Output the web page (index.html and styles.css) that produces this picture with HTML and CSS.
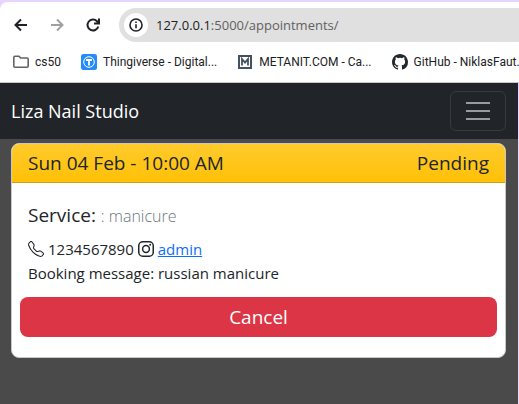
FILE: index.html
```html
<!DOCTYPE html>
<html lang="en">
<head>
<meta charset="utf-8">
<meta name="viewport" content="width=device-width, initial-scale=1">
<title>Liza Nail Studio</title>
<link rel="stylesheet" href="styles.css">
</head>
<body>
<div class="window">
  <header class="browser">
    <div class="toolbar">
      <button class="tool" aria-label="Back"><svg viewBox="0 0 16 16" fill="none" stroke="#202124" stroke-width="2"><path d="M14 8H3M8 2.500 2.500 8 8 13.500"/></svg></button>
      <button class="tool" aria-label="Forward"><svg viewBox="0 0 16 16" fill="none" stroke="#a0a0a0" stroke-width="2"><path d="M2 8h11M8 2.500 13.500 8 8 13.500"/></svg></button>
      <button class="tool" aria-label="Reload"><svg viewBox="0 0 16 16" fill="none" stroke="#202124" stroke-width="2"><path d="M13.300 9.500A5.500 5.500 0 1 1 12 4.200L13.500 6M14 1.500v5H9"/></svg></button>
      <div class="address">
        <button class="site-info" aria-label="Site information"><svg viewBox="0 0 16 16" fill="none" stroke="#202124" stroke-width="1.600"><circle cx="8" cy="8" r="6"/><path d="M8 7.200v4M8 4.500v1.600"/></svg></button>
        <span class="url"><span class="host">127.0.0.1</span>:5000/appointments/</span>
      </div>
    </div>
    <nav class="bookmarks" aria-label="Bookmarks">
      <a class="bookmark" href="#"><svg viewBox="0 0 16 16" fill="none" stroke="#606368" stroke-width="1.600"><path d="M.8 3.500q0-1.200 1.200-1.200h4L7.800 4H14q1.200 0 1.200 1.200V12q0 1.200-1.200 1.200H2Q.8 13.200.8 12Z"/></svg><span>cs50</span></a>
      <a class="bookmark" href="#"><svg viewBox="0 0 16 16"><rect width="16" height="16" rx="2.500" fill="#248bfb"/><circle cx="8" cy="8" r="5.300" fill="none" stroke="#fff"/><path d="M5 6h6M8 6v5.500" stroke="#fff" stroke-width="1.800"/></svg><span>Thingiverse - Digital...</span></a>
      <a class="bookmark" href="#"><svg viewBox="0 0 16 16"><path d="M2 2h12v12H2Z" fill="#fff" stroke="#465160" stroke-width="2"/><path d="M5 11.500V5l3 3.600L11 5v6.500" fill="none" stroke="#465160" stroke-width="1.800"/></svg><span>METANIT.COM - Ca...</span></a>
      <a class="bookmark" href="#"><svg viewBox="0 0 16 16" fill="#24292f"><path d="M8 0C3.580 0 0 3.580 0 8c0 3.540 2.290 6.530 5.470 7.590.4.070.55-.17.55-.38 0-.19-.01-.82-.01-1.490-2.010.37-2.530-.49-2.690-.94-.09-.23-.48-.94-.82-1.130-.28-.15-.68-.52-.01-.53.63-.01 1.080.58 1.230.82.72 1.210 1.870.87 2.330.66.070-.52.28-.87.51-1.070-1.780-.2-3.640-.89-3.640-3.950 0-.87.31-1.590.82-2.150-.08-.2-.36-1.020.08-2.120 0 0 .67-.21 2.200.82a7.600 7.600 0 0 1 4 0c1.530-1.040 2.200-.82 2.200-.82.44 1.100.16 1.920.08 2.120.51.56.82 1.270.82 2.150 0 3.070-1.870 3.750-3.650 3.950.29.25.54.73.54 1.480 0 1.070-.01 1.930-.01 2.200 0 .21.15.46.55.38A8 8 0 0 0 16 8c0-4.420-3.580-8-8-8"/></svg><span>GitHub - NiklasFaut.</span></a>
    </nav>
  </header>
  <div class="page">
    <nav class="navbar">
      <a class="brand" href="#">Liza Nail Studio</a>
      <button class="toggler" aria-label="Toggle navigation"><svg viewBox="0 0 32 32"><path d="M4 8h24M4 16h24M4 24h24" fill="none" stroke="#9a9b9c" stroke-width="2"/></svg></button>
    </nav>
    <main>
      <article class="card">
        <div class="card-header"><span>Sun 04 Feb - 10:00 AM</span><span>Pending</span></div>
        <div class="card-body">
          <h1 class="service">Service: <small>: manicure</small></h1>
          <p class="contact">
            <svg viewBox="0 0 16 16" fill="currentColor"><path d="M3.654 1.328a.678.678 0 0 0-1.015-.063L1.605 2.300c-.483.484-.661 1.169-.45 1.770a17.600 17.600 0 0 0 4.168 6.608 17.600 17.600 0 0 0 6.608 4.168c.601.211 1.286.033 1.770-.45l1.034-1.034a.678.678 0 0 0-.063-1.015l-2.307-1.794a.68.68 0 0 0-.58-.122l-2.190.547a1.750 1.750 0 0 1-1.657-.459L5.482 8.062a1.750 1.750 0 0 1-.46-1.657l.548-2.190a.68.68 0 0 0-.122-.58zM1.884.511a1.745 1.745 0 0 1 2.612.163L6.290 2.980c.329.423.445.974.315 1.494l-.547 2.190a.68.68 0 0 0 .178.643l2.457 2.457a.68.68 0 0 0 .644.178l2.189-.547a1.750 1.750 0 0 1 1.494.315l2.306 1.794c.829.645.905 1.870.163 2.611l-1.034 1.034c-.740.740-1.846 1.065-2.877.702a18.600 18.600 0 0 1-7.010-4.420 18.600 18.600 0 0 1-4.420-7.009c-.362-1.030-.037-2.137.703-2.877z"/></svg>
            <span>1234567890</span>
            <svg viewBox="0 0 16 16" fill="none" stroke="currentColor" stroke-width="1.500"><rect x=".75" y=".75" width="14.500" height="14.500" rx="4"/><circle cx="8" cy="8" r="3.400"/><circle cx="12.200" cy="3.800" r=".95" fill="currentColor" stroke="none"/></svg>
            <a href="#">admin</a>
          </p>
          <p>Booking message: russian manicure</p>
        </div>
        <button class="cancel">Cancel</button>
      </article>
    </main>
  </div>
</div>
</body>
</html>
```
FILE: styles.css
```css
* { box-sizing: border-box; }
body {
  margin: 0;
  background: #e8d5ff;
  color: #212529;
  font-family: "Segoe UI", "Open Sans", "Noto Sans", sans-serif;
  font-size: 15px;
  line-height: 24px;
}
button { padding: 0; border: 0; background: none; font: inherit; }
svg { display: block; flex: none; width: 16px; height: 16px; }
.window { display: flex; flex-direction: column; min-height: 100vh; padding-top: 2px; overflow: hidden; }
.browser { background: #fff; border-top-left-radius: 8px; border-bottom: 1px solid #c8c8c8; }
.toolbar { display: flex; align-items: center; gap: 20px; padding: 6px 0 0 13px; }
.tool { flex: none; width: 16px; height: 16px; }
.address {
  display: flex;
  flex: 1;
  align-items: center;
  gap: 8px;
  height: 34px;
  margin-left: -2px;
  padding-left: 5px;
  background: #e0e0e0;
  border-radius: 17px 0 0 17px;
}
.site-info { display: grid; place-items: center; width: 24px; height: 24px; border-radius: 50%; background: #fff; }
.url { color: #606060; font-size: 13px; }
.host { color: #202124; }
.bookmarks { display: flex; gap: 20px; height: 40px; padding-left: 13px; align-items: center; }
.bookmark {
  display: flex;
  flex: none;
  align-items: center;
  gap: 6px;
  color: #202124;
  font-family: "Segoe UI", Roboto, sans-serif;
  font-size: 12px;
  text-decoration: none;
  white-space: nowrap;
}
.page { flex: 1; margin-right: 1px; background: #4a4a4a; }
.navbar { display: flex; align-items: center; justify-content: space-between; height: 56px; padding: 0 12px 0 11px; background: #212529; }
.brand { color: #fff; font-size: 18px; text-decoration: none; }
.toggler { display: grid; place-items: center; width: 56px; height: 40px; border: 1px solid #373b3e; border-radius: 6px; }
.toggler svg { width: 32px; height: 32px; }
main { padding: 4px 12px 0 11px; }
.card { padding-bottom: 20px; overflow: hidden; border: 1px solid #c8c8c8; border-radius: 8px; background: #fff; }
.card-header {
  display: flex;
  justify-content: space-between;
  padding: 7px 16px;
  border-bottom: 1px solid #cda118;
  background: linear-gradient(#ffca2c, #ffc107);
  font-size: 19px;
}
.card-body { padding: 20px 16px 11px; }
.service { margin: 0 0 9px; font-size: 19px; font-weight: 400; line-height: 24px; }
.service small { color: #6c757d; font-size: 16px; font-weight: 300; }
p { margin: 0; }
.contact { display: flex; align-items: center; gap: 4px; }
.contact a { color: #0d6efd; }
.cancel { display: block; width: calc(100% - 16px); height: 40px; margin: 1px 8px 0; border-radius: 8px; background: #dc3545; color: #fff; font-size: 19px; }
```
